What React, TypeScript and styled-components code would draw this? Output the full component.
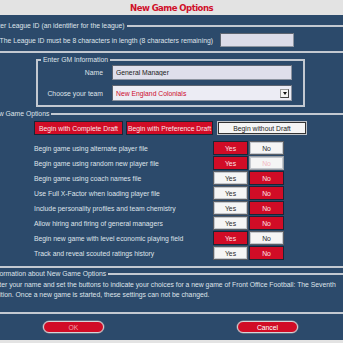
import React from "react";
import styled, { createGlobalStyle } from "styled-components";

const Global = createGlobalStyle`
  html, body { margin: 0; padding: 0; width: 343px; height: 343px; overflow: hidden; background: #2c4a6b; }
  #root { width: 343px; height: 343px; }
  * { box-sizing: border-box; }
`;

const RED = "#d10c26";
const LINE = "#c3c9d1";
const TEXT = "#dfe3ea";

const Screen = styled.div`
  width: 343px;
  height: 343px;
  overflow: hidden;
  display: flex;
  flex-direction: column;
  font-family: "Liberation Sans", Arial, sans-serif;
  font-size: 6.8px;
  color: ${TEXT};
`;

const TitleBar = styled.header`
  height: 15px;
  flex: none;
  background: #e3e3e3;
  display: flex;
  align-items: center;
  justify-content: center;
`;

const Title = styled.h1`
  margin: 0;
  font-family: "DejaVu Sans Condensed", "DejaVu Sans", sans-serif;
  font-stretch: condensed;
  font-weight: bold;
  font-size: 9.5px;
  letter-spacing: -0.55px;
  line-height: 1;
  color: #d0102b;
`;

const Body = styled.main`
  flex: 1;
  background: #2c4a6b;
  overflow: hidden;
  padding-top: 7px;
`;

const BottomStrip = styled.div`
  height: 3px;
  flex: none;
  background: #e3e3e3;
`;

const Dialog = styled.div`
  width: 381px;
  margin-left: -20px;
  display: flex;
  flex-direction: column;
`;

const Group = styled.fieldset<{ $top?: number; $width?: number }>`
  margin: ${(p) => p.$top ?? 0}px auto 0;
  padding: 0;
  border: 2px solid ${LINE};
  min-width: 0;
  width: ${(p) => (p.$width ? `${p.$width}px` : "100%")};
`;

const Legend = styled.legend<{ $indent?: number }>`
  margin-left: ${(p) => p.$indent ?? 3}px;
  padding: 0 2px;
  font-size: 6.8px;
  line-height: 8px;
  color: ${TEXT};
`;

const Content = styled.div<{ $pad: string }>`
  padding: ${(p) => p.$pad};
`;

const FieldRow = styled.div<{ $labelWidth: number; $gap: number }>`
  display: flex;
  align-items: center;
  & > label {
    width: ${(p) => p.$labelWidth}px;
    margin-right: ${(p) => p.$gap}px;
    text-align: right;
    flex: none;
    white-space: nowrap;
  }
`;

const TextBox = styled.input<{ $w: number; $h: number; $bg: string }>`
  width: ${(p) => p.$w}px;
  height: ${(p) => p.$h}px;
  background: ${(p) => p.$bg};
  border: 1px solid #8d94a0;
  border-top-color: #5d6470;
  border-left-color: #5d6470;
  padding: 0 3px;
  font-family: inherit;
  font-size: 6.8px;
  color: #222;
  outline: none;
  margin: 0;
`;

const SelectBox = styled.div`
  width: 180px;
  height: 16px;
  background: #ececf4;
  border: 1px solid #8d94a0;
  border-top-color: #5d6470;
  border-left-color: #5d6470;
  display: flex;
  align-items: center;
  justify-content: space-between;
  padding: 0 2px 0 3px;
  color: #cc0a2e;
`;

const ArrowButton = styled.span`
  width: 9px;
  height: 9px;
  background: #f4f4f4;
  border: 1px solid #9a9a9a;
  border-right-color: #444;
  border-bottom-color: #444;
  display: flex;
  align-items: center;
  justify-content: center;
  &::after {
    content: "";
    border-left: 2.5px solid transparent;
    border-right: 2.5px solid transparent;
    border-top: 3px solid #111;
  }
`;

const StackRows = styled.div<{ $gap: number }>`
  display: flex;
  flex-direction: column;
  gap: ${(p) => p.$gap}px;
`;

const DraftRow = styled.div`
  display: flex;
  justify-content: center;
  gap: 3px;
  margin-bottom: 6px;
`;

const DraftButton = styled.button<{ $w: number; $active?: boolean }>`
  width: ${(p) => p.$w}px;
  height: 14px;
  margin: 0;
  padding: 0;
  font-family: inherit;
  font-size: 6.8px;
  background: ${(p) => (p.$active ? "#f5f5f5" : RED)};
  color: ${(p) => (p.$active ? "#222" : "#fbe3e6")};
  border: 1px solid ${(p) => (p.$active ? "#bfc3c8" : "#1a2636")};
  box-shadow: ${(p) => (p.$active ? "inset 0 0 0 1px #333" : "none")};
  &:last-child { margin-left: 1px; }
`;

const OptionRow = styled.div`
  display: flex;
  align-items: center;
  height: 14px;
  padding-left: 52px;
`;

const OptionLabel = styled.span`
  width: 179px;
  flex: none;
  white-space: nowrap;
`;

const Pair = styled.div`
  display: flex;
  gap: 1px;
`;

type Mode = "on" | "off" | "disabled";

const Toggle = styled.button<{ $mode: Mode }>`
  width: 35px;
  height: 14px;
  margin: 0;
  padding: 0;
  font-family: inherit;
  font-size: 6.8px;
  background: ${(p) => (p.$mode === "on" ? RED : "#f5f5f5")};
  color: ${(p) => (p.$mode === "on" ? "#fbe3e6" : p.$mode === "disabled" ? "#f3b9c1" : "#2a2a2a")};
  border: 1px solid ${(p) => (p.$mode === "on" ? "#1a2636" : p.$mode === "disabled" ? "#9a9ea4" : "#5a5e64")};
  box-shadow: ${(p) => (p.$mode === "on" ? "none" : "inset 0 0 0 1px #c4c8ce")};
`;

const InfoText = styled.p`
  margin: 0;
  padding-left: 9px;
  line-height: 10px;
  white-space: nowrap;
`;

const Footer = styled.div`
  height: 26px;
  display: flex;
  align-items: center;
  justify-content: center;
  gap: 133px;
`;

const PillButton = styled.button<{ $dim?: boolean }>`
  width: 61px;
  height: 12px;
  margin: 0;
  padding: 0;
  border-radius: 6px;
  background: ${RED};
  border: 1px solid #d4d6da;
  box-shadow: 0 0 0 0.5px #8a8f98;
  font-family: inherit;
  font-size: 6.8px;
  color: ${(p) => (p.$dim ? "#f2a3ad" : "#fff")};
`;

const options: { label: string; yes: Mode; no: Mode }[] = [
  { label: "Begin game using alternate player file", yes: "on", no: "off" },
  { label: "Begin game using random new player file", yes: "on", no: "disabled" },
  { label: "Begin game using coach names file", yes: "off", no: "on" },
  { label: "Use Full X-Factor when loading player file", yes: "off", no: "on" },
  { label: "Include personality profiles and team chemistry", yes: "off", no: "on" },
  { label: "Allow hiring and firing of general managers", yes: "off", no: "on" },
  { label: "Begin new game with level economic playing field", yes: "on", no: "off" },
  { label: "Track and reveal scouted ratings history", yes: "off", no: "on" },
];

export default function App() {
  return (
    <>
      <Global />
      <Screen>
        <TitleBar>
          <Title>New Game Options</Title>
        </TitleBar>
        <Body>
          <Dialog>
            <Group>
              <Legend $indent={6}>Enter League ID (an identifier for the league)</Legend>
              <Content $pad="3px 0 4px">
                <FieldRow $labelWidth={231} $gap={7}>
                  <label>The League ID must be 8 characters in length (8 characters remaining)</label>
                  <TextBox $w={74} $h={14} $bg="#dcdce9" defaultValue="" />
                </FieldRow>
              </Content>
            </Group>

            <Group $top={3} $width={269}>
              <Legend>Enter GM Information</Legend>
              <Content $pad="1px 0 4px">
                <StackRows $gap={5}>
                  <FieldRow $labelWidth={65} $gap={9}>
                    <label>Name</label>
                    <TextBox $w={180} $h={15} $bg="#dfdfeb" defaultValue="General Manager" />
                  </FieldRow>
                  <FieldRow $labelWidth={65} $gap={9}>
                    <label>Choose your team</label>
                    <SelectBox>
                      <span>New England Colonials</span>
                      <ArrowButton />
                    </SelectBox>
                  </FieldRow>
                </StackRows>
              </Content>
            </Group>

            <Group $top={3}>
              <Legend $indent={6}>New Game Options</Legend>
              <Content $pad="3px 0 6px">
                <DraftRow>
                  <DraftButton $w={89}>Begin with Complete Draft</DraftButton>
                  <DraftButton $w={87}>Begin with Preference Draft</DraftButton>
                  <DraftButton $w={90} $active>Begin without Draft</DraftButton>
                </DraftRow>
                <StackRows $gap={1}>
                  {options.map((o) => (
                    <OptionRow key={o.label}>
                      <OptionLabel>{o.label}</OptionLabel>
                      <Pair>
                        <Toggle $mode={o.yes}>Yes</Toggle>
                        <Toggle $mode={o.no}>No</Toggle>
                      </Pair>
                    </OptionRow>
                  ))}
                </StackRows>
              </Content>
            </Group>

            <Group $top={2}>
              <Legend $indent={8}>Information about New Game Options</Legend>
              <Content $pad="2px 0 12px">
                <InfoText>
                  Enter your name and set the buttons to indicate your choices for a new game of Front Office Football: The Seventh
                  <br />
                  Edition. Once a new game is started, these settings can not be changed.
                </InfoText>
              </Content>
            </Group>

            <Footer>
              <PillButton $dim>OK</PillButton>
              <PillButton>Cancel</PillButton>
            </Footer>
          </Dialog>
        </Body>
        <BottomStrip />
      </Screen>
    </>
  );
}
